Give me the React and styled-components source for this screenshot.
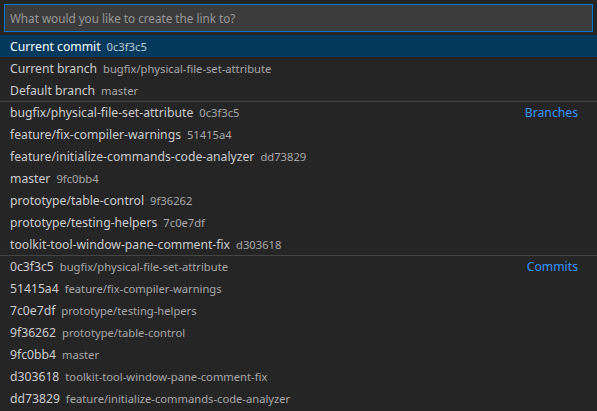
import React from 'react';
import styled, { createGlobalStyle } from 'styled-components';

const GlobalStyle = createGlobalStyle`
  html, body {
    margin: 0;
    padding: 0;
    background: #252526;
    height: 100%;
    overflow: hidden;
  }
`;

const Picker = styled.div`
  width: 597px;
  height: 411px;
  background: #252526;
  color: #cccccc;
  font-family: "Noto Sans", sans-serif;
  font-size: 12.2px;
  display: flex;
  flex-direction: column;
`;

const InputWrap = styled.div`
  padding: 4px 4px 0 4px;
`;

const Input = styled.input`
  box-sizing: border-box;
  width: 100%;
  height: 28px;
  background: #3c3c3c;
  border: 1px solid #0078d4;
  color: #cccccc;
  font-family: inherit;
  font-size: 11.7px;
  padding: 0 5px;
  outline: none;

  &::placeholder {
    color: #989898;
  }
`;

const List = styled.div`
  margin-top: 3px;
  display: flex;
  flex-direction: column;
`;

const Row = styled.div`
  box-sizing: border-box;
  height: 22px;
  display: flex;
  align-items: center;
  padding: 0 19px 0 10px;
  background: ${p => (p.$selected ? '#04395e' : 'transparent')};
  color: ${p => (p.$selected ? '#ffffff' : '#cccccc')};
  border-top: ${p => (p.$separator ? '1px solid #454545' : 'none')};
  white-space: nowrap;
`;

const Label = styled.span``;

const Description = styled.span`
  margin-left: 6px;
  font-size: 11.2px;
  color: ${p => (p.$selected ? '#c3ccd3' : '#a8a8a8')};
`;

const Group = styled.span`
  margin-left: auto;
  color: #3794ff;
`;

const items = [
  { label: 'Current commit', desc: '0c3f3c5', selected: true },
  { label: 'Current branch', desc: 'bugfix/physical-file-set-attribute' },
  { label: 'Default branch', desc: 'master' },
  { label: 'bugfix/physical-file-set-attribute', desc: '0c3f3c5', group: 'Branches' },
  { label: 'feature/fix-compiler-warnings', desc: '51415a4' },
  { label: 'feature/initialize-commands-code-analyzer', desc: 'dd73829' },
  { label: 'master', desc: '9fc0bb4' },
  { label: 'prototype/table-control', desc: '9f36262' },
  { label: 'prototype/testing-helpers', desc: '7c0e7df' },
  { label: 'toolkit-tool-window-pane-comment-fix', desc: 'd303618' },
  { label: '0c3f3c5', desc: 'bugfix/physical-file-set-attribute', group: 'Commits' },
  { label: '51415a4', desc: 'feature/fix-compiler-warnings' },
  { label: '7c0e7df', desc: 'prototype/testing-helpers' },
  { label: '9f36262', desc: 'prototype/table-control' },
  { label: '9fc0bb4', desc: 'master' },
  { label: 'd303618', desc: 'toolkit-tool-window-pane-comment-fix' },
  { label: 'dd73829', desc: 'feature/initialize-commands-code-analyzer' },
];

export default function App() {
  return (
    <>
      <GlobalStyle />
      <Picker>
        <InputWrap>
          <Input placeholder="What would you like to create the link to?" />
        </InputWrap>
        <List>
          {items.map((it, i) => (
            <Row key={i} $selected={it.selected} $separator={!!it.group}>
              <Label>{it.label}</Label>
              <Description $selected={it.selected}>{it.desc}</Description>
              {it.group && <Group>{it.group}</Group>}
            </Row>
          ))}
        </List>
      </Picker>
    </>
  );
}
